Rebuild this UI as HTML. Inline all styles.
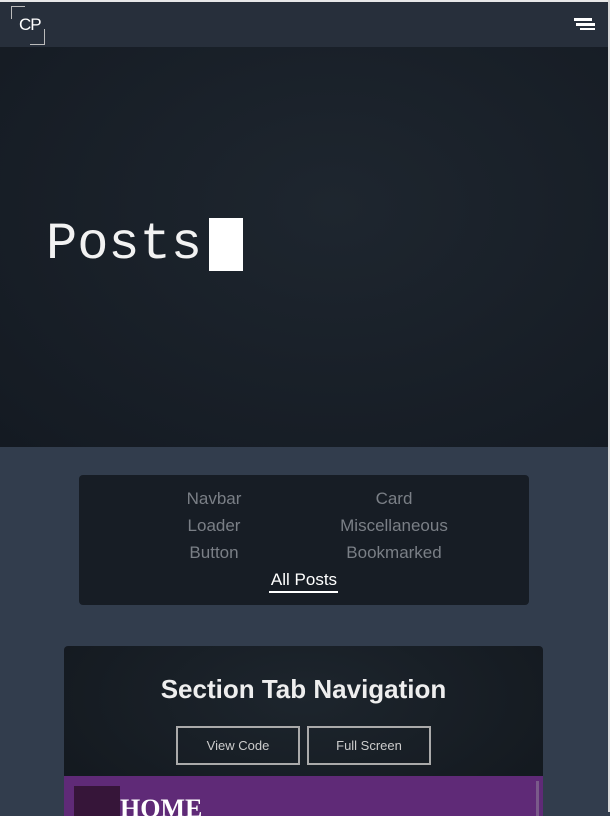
<!DOCTYPE html>
<html><head><style>
*{margin:0;padding:0;box-sizing:border-box}
body{width:610px;height:812px;overflow:hidden;background:#323d4d;font-family:"Liberation Sans",sans-serif;position:relative}
.top{position:absolute;left:0;top:0;width:610px;height:2px;background:#e8e8e8}
.nav{position:absolute;left:0;top:2px;width:608px;height:45px;background:#272f3b}
.rb{position:absolute;right:0;top:0;width:2px;height:812px;background:#d8d8d8}
.logo{position:absolute;left:19px;top:13px;color:#fff;font-size:17px;letter-spacing:-1px}
.c1{position:absolute;left:11px;top:4px;width:14px;height:13px;border-left:1px solid #bbb;border-top:1px solid #bbb}
.c2{position:absolute;left:30px;top:27px;width:15px;height:16px;border-right:1px solid #bbb;border-bottom:1px solid #bbb}
.hero{position:absolute;left:0;top:47px;width:608px;height:400px;background:radial-gradient(ellipse at 55% 40%,#1e262f,#141a22)}
.ht{position:absolute;left:46px;font-family:"Liberation Mono",monospace;font-size:52px;color:#f2f2f2}
.cur{position:absolute;left:209px;width:34px;height:53px;background:#fff}
.filt{position:absolute;left:79px;top:475px;width:450px;height:130px;background:#171d25;border-radius:4px}
.f{position:absolute;color:#7a7f86;font-size:17px;text-align:center;width:200px}
.card{position:absolute;left:64px;top:646px;width:479px;height:170px;background:radial-gradient(ellipse at 50% 30%,#1d252d,#12171d);border-radius:4px 4px 0 0;overflow:hidden}
.card h2{position:absolute;top:28px;width:100%;text-align:center;color:#eee;font-size:26px;font-weight:bold}
.btn{position:absolute;top:80px;width:124px;height:39px;border:2px solid #aaa;color:#ccc;font-size:13px;text-align:center;line-height:35px}
.pur{position:absolute;left:0;top:130px;width:100%;height:50px;background:#5f2a77}
.hl{position:absolute;height:3px;background:#fff}
</style></head><body>
<div class="top"></div>
<div class="nav"><div class="c1"></div><div class="c2"></div><div class="logo">CP</div>
<div class="hl" style="left:574px;top:16px;width:18px"></div>
<div class="hl" style="left:576px;top:21px;width:19px"></div>
<div class="hl" style="left:580px;top:26px;width:15px;height:2px"></div></div>
<div class="hero"><div class="ht" style="top:168px">Posts</div><div class="cur" style="top:171px"></div></div>
<div class="filt">
<div class="f" style="left:35px;top:14px">Navbar</div><div class="f" style="left:215px;top:14px">Card</div>
<div class="f" style="left:35px;top:41px">Loader</div><div class="f" style="left:215px;top:41px">Miscellaneous</div>
<div class="f" style="left:35px;top:68px">Button</div><div class="f" style="left:215px;top:68px">Bookmarked</div>
<div class="f" style="left:125px;top:95px;color:#fff">All Posts</div>
<div style="position:absolute;left:190px;top:116px;width:69px;height:2px;background:#fff"></div>
</div>
<div class="card"><h2>Section Tab Navigation</h2>
<div class="btn" style="left:112px">View Code</div><div class="btn" style="left:243px">Full Screen</div>
<div class="pur"><div style="position:absolute;left:10px;top:10px;width:46px;height:40px;background:#361539"></div>
<div style="position:absolute;left:56px;top:18px;color:#fff;font-family:'Liberation Serif',serif;font-size:26px;font-weight:bold">HOME</div>
<div style="position:absolute;right:4px;top:5px;width:3px;height:40px;background:#7a5a8a"></div></div>
</div>
<div class="rb"></div>
</body></html>
